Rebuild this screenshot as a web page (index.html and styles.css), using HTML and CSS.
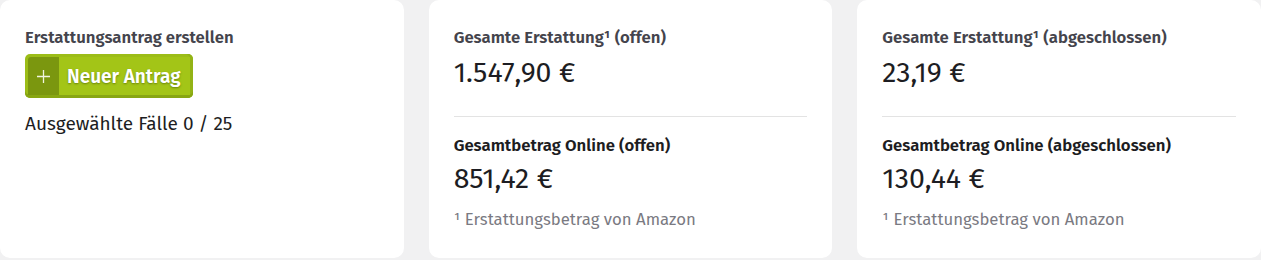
FILE: index.html
```html
<!DOCTYPE html>
<html lang="de">
<head>
<meta charset="utf-8">
<link rel="stylesheet" href="styles.css">
</head>
<body>
<div class="grid">
  <section class="card">
    <h3 class="label">Erstattungsantrag erstellen</h3>
    <button class="btn"><span class="btn-icon"><svg width="13" height="13" viewBox="0 0 13 13"><path d="M6.5 0v13M0 6.5h13" stroke="#f1f5e0" stroke-width="1.3" fill="none"/></svg></span><span class="btn-text">Neuer Antrag</span></button>
    <p class="selected">Ausgewählte Fälle 0 / 25</p>
  </section>
  <section class="card">
    <h3 class="label">Gesamte Erstattung¹ (offen)</h3>
    <div class="amount">1.547,90 €</div>
    <hr class="divider">
    <h3 class="label dark">Gesamtbetrag Online (offen)</h3>
    <div class="amount tight">851,42 €</div>
    <p class="note">¹ Erstattungsbetrag von Amazon</p>
  </section>
  <section class="card">
    <h3 class="label">Gesamte Erstattung¹ (abgeschlossen)</h3>
    <div class="amount">23,19 €</div>
    <hr class="divider">
    <h3 class="label dark">Gesamtbetrag Online (abgeschlossen)</h3>
    <div class="amount tight">130,44 €</div>
    <p class="note">¹ Erstattungsbetrag von Amazon</p>
  </section>
</div>
</body>
</html>
```
FILE: styles.css
```css
* { box-sizing: border-box; }
html, body { margin: 0; padding: 0; }
body {
  background: #f1f1f2;
  font-family: "Fira Sans", "Open Sans", "Noto Sans", sans-serif;
  color: #1d1d22;
}
.grid {
  display: grid;
  grid-template-columns: repeat(3, 1fr);
  gap: 25px;
  height: 258px;
}
.card {
  background: #fff;
  border-radius: 10px;
  padding: 26px 25px 0;
  display: flex;
  flex-direction: column;
  align-items: flex-start;
}
.label {
  margin: 0;
  font-size: 16.75px;
  font-weight: 600;
  color: #44444c;
  line-height: 22px;
}
.label.dark { color: #1d1d22; }
.btn {
  margin-top: 6px;
  display: flex;
  align-items: stretch;
  height: 44px;
  padding: 0 3px 3px 0;
  border: 0;
  border-radius: 5px;
  background: #9cbd18;
  box-shadow: inset 0 -3px 0 #88a612, inset -3px 0 0 #93b316;
  font-family: inherit;
  cursor: pointer;
  overflow: hidden;
}
.btn-icon {
  width: 31px;
  background: #7b970f;
  display: flex;
  align-items: center;
  justify-content: center;
  margin: 3px 0 0 3px;
  border-radius: 3px 0 0 0;
}
.btn-text {
  display: flex;
  align-items: center;
  padding: 0 9px 0 8px;
  background: #a3c517;
  margin-top: 3px;
  color: #fff;
  font-size: 19px;
  font-weight: 600;
  text-shadow: 0 1px 2px rgba(60, 80, 0, 0.55);
}
.selected {
  margin: 13px 0 0;
  font-size: 19px;
  line-height: 26px;
}
.amount {
  margin-top: 8px;
  font-size: 28.5px;
  line-height: 34px;
}
.amount.tight { margin-top: 6px; }
.divider {
  align-self: stretch;
  margin: 26px 0 17px;
  border: 0;
  border-top: 1px solid #e3e3e3;
}
.note {
  margin: 12px 0 0;
  font-size: 16.75px;
  line-height: 22px;
  color: #7a7a82;
}
```
